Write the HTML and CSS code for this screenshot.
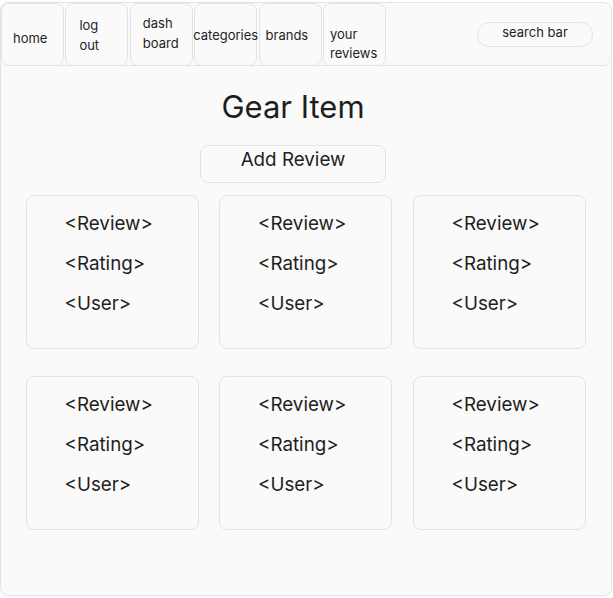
FILE: index.html
```html
<!DOCTYPE html>
<html>
<head>
<meta charset="utf-8">
<link rel="stylesheet" href="styles.css">
</head>
<body>
<div class="frame">
  <nav class="nav">
    <div class="nav-btn home">home</div>
    <div class="nav-btn logout">log<br>out</div>
    <div class="nav-btn dash">dash<br>board</div>
    <div class="nav-btn cat">categories</div>
    <div class="nav-btn brands">brands</div>
    <div class="nav-btn reviews">your<br>reviews</div>
    <div class="search">search bar</div>
  </nav>
  <main class="main">
    <div class="head">
      <h1 class="title">Gear Item</h1>
      <div class="add-btn">Add Review</div>
    </div>
    <div class="grid">
      <div class="card"><div>&lt;Review&gt;</div><div>&lt;Rating&gt;</div><div>&lt;User&gt;</div></div>
      <div class="card"><div>&lt;Review&gt;</div><div>&lt;Rating&gt;</div><div>&lt;User&gt;</div></div>
      <div class="card"><div>&lt;Review&gt;</div><div>&lt;Rating&gt;</div><div>&lt;User&gt;</div></div>
      <div class="card"><div>&lt;Review&gt;</div><div>&lt;Rating&gt;</div><div>&lt;User&gt;</div></div>
      <div class="card"><div>&lt;Review&gt;</div><div>&lt;Rating&gt;</div><div>&lt;User&gt;</div></div>
      <div class="card"><div>&lt;Review&gt;</div><div>&lt;Rating&gt;</div><div>&lt;User&gt;</div></div>
    </div>
  </main>
</div>
</body>
</html>
```
FILE: styles.css
```css
* { box-sizing: border-box; }
body {
  margin: 0;
  background: #ffffff;
  font-family: Inter, "Noto Sans", sans-serif;
  color: #1e1e1e;
}
.frame {
  margin-top: 2px;
  width: 612px;
  height: 594px;
  border: 1px solid #e3e3e3;
  border-radius: 8px;
  background: #fafafa;
  overflow: hidden;
}
.nav {
  display: flex;
  gap: 1.4px;
  height: 63px;
  border-bottom: 1px solid #e3e3e3;
  border-radius: 8px;
}
.nav-btn {
  width: 63px;
  height: 63px;
  border: 1px solid #e3e3e3;
  border-radius: 8px;
  background: #fafafa;
  font-size: 13px;
  line-height: 20px;
  padding-left: 13px;
  white-space: nowrap;
}
.home { padding-left: 11px; padding-top: 24px; }
.logout { padding-top: 11px; }
.dash { padding-top: 9px; padding-left: 12px; }
.cat { padding-left: 0; padding-top: 21px; display: flex; justify-content: center; }
.brands { padding-left: 6px; padding-top: 21px; }
.reviews { padding-left: 6px; padding-top: 21px; line-height: 19px; }
.search {
  margin-left: auto;
  margin-right: 18px;
  margin-top: 19px;
  width: 116px;
  height: 25px;
  border: 1px solid #e3e3e3;
  border-radius: 12px;
  font-size: 13px;
  line-height: 19px;
  text-align: center;
}
.main {
  display: flex;
  flex-direction: column;
  align-items: center;
}
.head {
  display: flex;
  flex-direction: column;
  align-items: center;
  align-self: stretch;
  padding-right: 26px;
}
.title {
  margin: 23px 0 0;
  font-size: 31px;
  font-weight: 400;
  line-height: 36px;
}
.add-btn {
  margin-top: 20px;
  width: 186px;
  height: 38px;
  border: 1px solid #e3e3e3;
  border-radius: 8px;
  font-size: 18.8px;
  line-height: 22px;
  padding-top: 3px;
  text-align: center;
}
.grid {
  margin-top: 12px;
  display: grid;
  grid-template-columns: repeat(3, 173px);
  column-gap: 20.5px;
  row-gap: 27px;
  margin-right: 1px;
}
.card {
  height: 154px;
  border: 1px solid #e3e3e3;
  border-radius: 8px;
  padding: 8px 0 0 38px;
  font-size: 18.8px;
  line-height: 40px;
}
```
